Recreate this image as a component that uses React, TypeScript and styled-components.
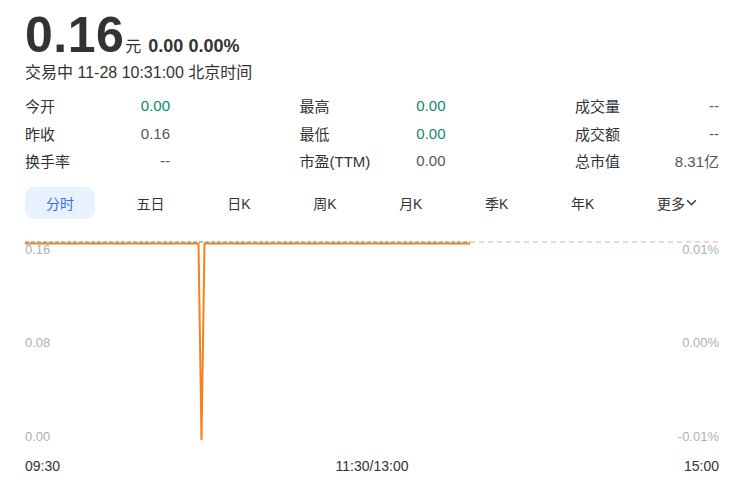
import React from "react";
import styled, { createGlobalStyle } from "styled-components";

const GlobalStyle = createGlobalStyle`
  body {
    margin: 0;
    background: #fff;
    font-family: "Liberation Sans", "Noto Sans CJK SC", sans-serif;
    color: #333;
  }
`;

type Stat = { label: string; value: string; green?: boolean };

const stats: Stat[][] = [
  [
    { label: "今开", value: "0.00", green: true },
    { label: "昨收", value: "0.16" },
    { label: "换手率", value: "--" },
  ],
  [
    { label: "最高", value: "0.00", green: true },
    { label: "最低", value: "0.00", green: true },
    { label: "市盈(TTM)", value: "0.00" },
  ],
  [
    { label: "成交量", value: "--" },
    { label: "成交额", value: "--" },
    { label: "总市值", value: "8.31亿" },
  ],
];

const tabs = ["分时", "五日", "日K", "周K", "月K", "季K", "年K"];

export default function App() {
  return (
    <>
      <GlobalStyle />
      <Page>
        <PriceRow>
          <Price>0.16</Price>
          <Unit>元</Unit>
          <Change>0.00 0.00%</Change>
        </PriceRow>
        <Status>交易中 11-28 10:31:00 北京时间</Status>

        <StatsGrid>
          {stats.map((col, i) => (
            <StatCol key={i}>
              {col.map((s) => (
                <StatRow key={s.label}>
                  <StatLabel>{s.label}</StatLabel>
                  <StatValue $green={s.green}>{s.value}</StatValue>
                </StatRow>
              ))}
            </StatCol>
          ))}
        </StatsGrid>

        <Tabs>
          {tabs.map((t, i) => (
            <Tab key={t} $active={i === 0}>
              {t}
            </Tab>
          ))}
          <Tab>
            更多
            <svg width="13" height="13" viewBox="0 0 12 12">
              <path d="M2 4 L6 8 L10 4" fill="none" stroke="#333" strokeWidth="1.3" />
            </svg>
          </Tab>
        </Tabs>

        <Chart>
          <svg width="694" height="204" viewBox="0 0 694 204">
            <line x1="445" y1="2" x2="694" y2="2" stroke="#f7a3a3" strokeWidth="1" strokeDasharray="5 4" />
            <polyline
              points="0,3.5 173.5,3.5 176.5,200 179.5,3.5 445,3.5"
              fill="none"
              stroke="#f5821f"
              strokeWidth="2"
            />
            <line x1="0" y1="2" x2="445" y2="2" stroke="#3f9a86" strokeWidth="1" strokeDasharray="4 2" />
          </svg>
          <AxisCol>
            <AxisLabel>0.16</AxisLabel>
            <AxisLabel>0.08</AxisLabel>
            <AxisLabel>0.00</AxisLabel>
          </AxisCol>
          <AxisCol $right>
            <AxisLabel>0.01%</AxisLabel>
            <AxisLabel>0.00%</AxisLabel>
            <AxisLabel>-0.01%</AxisLabel>
          </AxisCol>
        </Chart>

        <TimeRow>
          <span>09:30</span>
          <span>11:30/13:00</span>
          <span>15:00</span>
        </TimeRow>
      </Page>
    </>
  );
}

const Page = styled.div`
  width: 694px;
  padding: 10px 0 0 25px;
`;

const PriceRow = styled.div`
  display: flex;
  align-items: baseline;
  height: 50px;
`;

const Price = styled.span`
  font-size: 50px;
  line-height: 50px;
  font-weight: bold;
  color: #333;
  letter-spacing: 0.5px;
`;

const Unit = styled.span`
  font-size: 16px;
  margin-left: 1px;
  color: #333;
`;

const Change = styled.span`
  font-size: 18px;
  font-weight: bold;
  margin-left: 7px;
  color: #333;
`;

const Status = styled.div`
  margin-top: 3px;
  font-size: 16px;
  line-height: 20px;
  color: #333;
`;

const StatsGrid = styled.div`
  display: grid;
  grid-template-columns: 145px 146px 144px;
  justify-content: space-between;
  margin-top: 9px;
`;

const StatCol = styled.div`
  display: flex;
  flex-direction: column;
`;

const StatRow = styled.div`
  display: flex;
  justify-content: space-between;
  align-items: center;
  height: 27.5px;
  font-size: 15px;
`;

const StatLabel = styled.span`
  color: #333;
`;

const StatValue = styled.span<{ $green?: boolean }>`
  color: ${(p) => (p.$green ? "#0e8a6c" : "#555")};
`;

const Tabs = styled.div`
  display: flex;
  justify-content: space-between;
  margin-top: 12px;
`;

const Tab = styled.div<{ $active?: boolean }>`
  display: flex;
  align-items: center;
  height: 32px;
  padding: 0 21px;
  border-radius: 9px;
  font-size: 14px;
  color: ${(p) => (p.$active ? "#3d6cf0" : "#333")};
  background: ${(p) => (p.$active ? "#e8f2ff" : "transparent")};
`;

const Chart = styled.div`
  position: relative;
  margin-top: 21px;
  height: 204px;

  svg {
    display: block;
  }
`;

const AxisCol = styled.div<{ $right?: boolean }>`
  position: absolute;
  top: 2px;
  bottom: 0;
  ${(p) => (p.$right ? "right: 0;" : "left: 0;")}
  display: flex;
  flex-direction: column;
  justify-content: space-between;
  align-items: ${(p) => (p.$right ? "flex-end" : "flex-start")};
`;

const AxisLabel = styled.span`
  font-size: 13px;
  line-height: 15px;
  color: #b0b0b0;
`;

const TimeRow = styled.div`
  display: flex;
  justify-content: space-between;
  margin-top: 14px;
  font-size: 14px;
  line-height: 16px;
  color: #333;
`;
